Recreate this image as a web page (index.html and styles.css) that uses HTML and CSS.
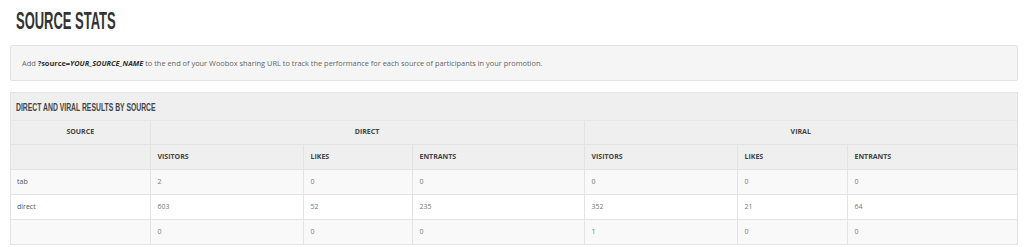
FILE: index.html
```html
<!DOCTYPE html>
<html>
<head>
<meta charset="utf-8">
<link rel="stylesheet" href="styles.css">
</head>
<body>
<div class="page">
  <h1 class="title"><span class="condensed">SOURCE STATS</span></h1>
  <div class="info">Add <b>?source=<i>YOUR_SOURCE_NAME</i></b> to the end of your Woobox sharing URL to track the performance for each source of participants in your promotion.</div>
  <div class="panel">
    <div class="panel-head"><span class="condensed">DIRECT AND VIRAL RESULTS BY SOURCE</span></div>
    <table class="stats">
      <colgroup>
        <col style="width:139px"><col style="width:153px"><col style="width:109px"><col style="width:172px"><col style="width:153px"><col style="width:110px"><col>
      </colgroup>
      <thead>
        <tr class="group">
          <th class="center">SOURCE</th>
          <th class="center" colspan="3">DIRECT</th>
          <th class="center" colspan="3">VIRAL</th>
        </tr>
        <tr class="sub">
          <th></th>
          <th>VISITORS</th><th>LIKES</th><th>ENTRANTS</th>
          <th>VISITORS</th><th>LIKES</th><th>ENTRANTS</th>
        </tr>
      </thead>
      <tbody>
        <tr class="odd"><td class="src">tab</td><td>2</td><td>0</td><td>0</td><td>0</td><td>0</td><td>0</td></tr>
        <tr><td class="src">direct</td><td>603</td><td>52</td><td>235</td><td>352</td><td>21</td><td>64</td></tr>
        <tr class="odd"><td class="src"></td><td>0</td><td>0</td><td>0</td><td>1</td><td>0</td><td>0</td></tr>
      </tbody>
    </table>
  </div>
</div>
</body>
</html>
```

FILE: styles.css
```css
html, body {
  margin: 0;
  padding: 0;
  background: #fff;
}
body {
  font-family: "Open Sans", "Liberation Sans", sans-serif;
  color: #555;
}
.page {
  padding: 0 6px 0 10px;
}
.title {
  margin: 0;
  padding: 7px 0 0 6px;
  height: 45px;
  box-sizing: border-box;
  font-family: "Liberation Sans", sans-serif;
  font-weight: bold;
  font-size: 24px;
  line-height: 28px;
  color: #333;
}
.condensed {
  display: inline-block;
  transform-origin: left center;
  white-space: nowrap;
}
.title .condensed {
  transform: scaleX(0.54);
}
.panel-head .condensed {
  transform: scaleX(0.62);
}
.info {
  height: 36px;
  box-sizing: border-box;
  background: #f5f5f5;
  border: 1px solid #e3e3e3;
  border-radius: 2px;
  padding: 0 11px;
  font-size: 7.4px;
  line-height: 35px;
  color: #666;
}
.info b {
  color: #333;
}
.panel {
  margin-top: 11px;
  border: 1px solid #e3e3e3;
  background: #efefef;
}
.panel-head {
  height: 28px;
  padding: 0 5px;
  font-family: "Liberation Sans", sans-serif;
  font-weight: bold;
  font-size: 11px;
  line-height: 29px;
  color: #444;
  border-bottom: 1px solid #e6e6e6;
  box-sizing: border-box;
}
.stats {
  width: 100%;
  border-collapse: collapse;
  table-layout: fixed;
}
.stats tr {
  height: 25px;
}
.stats tr.group {
  height: 23px;
}
.stats th, .stats td {
  padding: 0 7px;
  border-left: 1px solid #e3e3e3;
  border-top: 1px solid #e3e3e3;
  text-align: left;
  font-size: 7px;
  line-height: 10px;
}
.stats tr > :first-child {
  border-left: none;
}
.stats tr.group th {
  border-top: none;
}
.stats th {
  background: #efefef;
  font-weight: bold;
  color: #444;
}
.stats th.center {
  text-align: center;
}
.stats td {
  background: #fff;
  color: #777;
}
.stats tr.odd td {
  background: #f9f9f9;
}
.stats td.src {
  color: #555;
  padding-left: 6px;
}
```
